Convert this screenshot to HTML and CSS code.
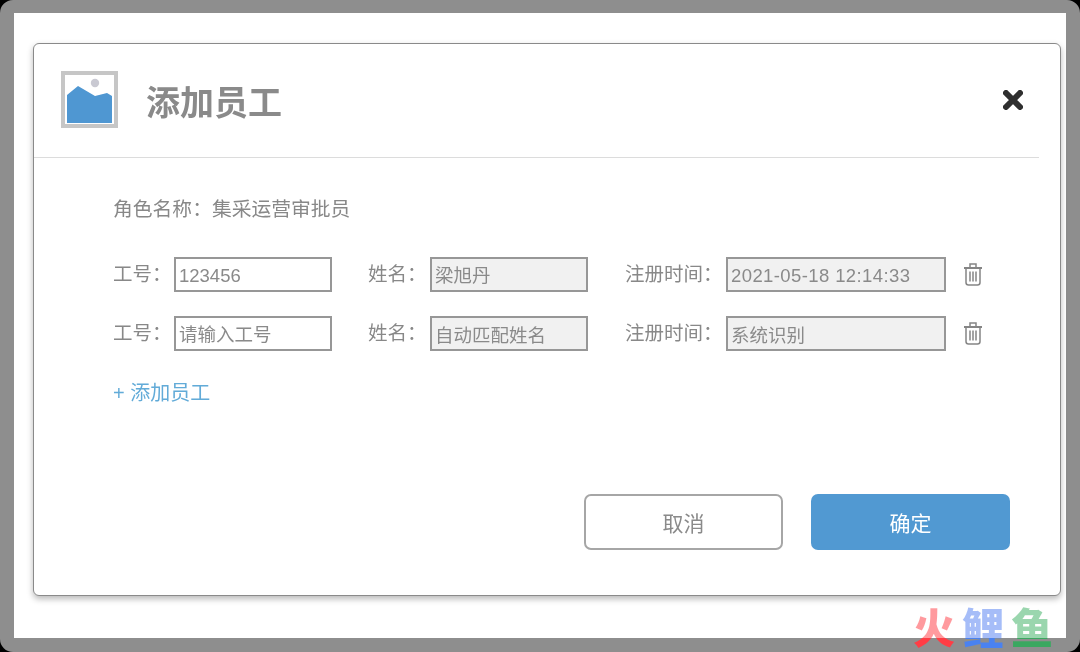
FILE: index.html
```html
<!DOCTYPE html>
<html lang="zh-CN">
<head>
<meta charset="utf-8">
<title>添加员工</title>
<link rel="stylesheet" href="styles.css">
</head>
<body>
<div class="frame">
  <section class="dialog">
    <header class="dialog-head">
      <svg class="logo" viewBox="0 0 57 57" width="57" height="57">
        <rect x="2" y="2" width="53" height="53" fill="#fff" stroke="#c6c6c6" stroke-width="4"/>
        <circle cx="34" cy="12" r="4.2" fill="#c9c9d2"/>
        <path d="M6 24 L17 15 L34 25 L46 22 L51 25 V52 H6 Z" fill="#4f97d2"/>
      </svg>
      <h1 class="title">添加员工</h1>
      <svg class="close" viewBox="0 0 20 20" width="20" height="20">
        <path d="M3 3 L17 17 M17 3 L3 17" stroke="#2f2f2f" stroke-width="6" stroke-linecap="round" fill="none"/>
      </svg>
    </header>
    <div class="dialog-body">
      <p class="role">角色名称：集采运营审批员</p>
      <div class="row">
        <label class="label label-id">工号：</label>
        <input class="field field-s low" value="123456" readonly>
        <label class="label label-name">姓名：</label>
        <input class="field field-s off" value="梁旭丹" readonly>
        <label class="label label-time">注册时间：</label>
        <input class="field field-l off stamp" value="2021-05-18 12:14:33" readonly>
        <svg class="trash" viewBox="0 0 20 24" width="20" height="24">
          <g fill="none" stroke="#858585" stroke-width="1.5">
            <path d="M1 6 H19" stroke-width="2"/>
            <path d="M7 5.500 V2 H13 V5.500"/>
            <path d="M3 6 V20.500 Q3 23 5.500 23 H14.500 Q17 23 17 20.500 V6"/>
            <path d="M7 9.500 V19.500 M10 9.500 V19.500 M13 9.500 V19.500"/>
          </g>
        </svg>
      </div>
      <div class="row">
        <label class="label label-id">工号：</label>
        <input class="field field-s low" placeholder="请输入工号" readonly>
        <label class="label label-name">姓名：</label>
        <input class="field field-s off next" value="自动匹配姓名" readonly>
        <label class="label label-time">注册时间：</label>
        <input class="field field-l off next" value="系统识别" readonly>
        <svg class="trash" viewBox="0 0 20 24" width="20" height="24">
          <g fill="none" stroke="#858585" stroke-width="1.5">
            <path d="M1 6 H19" stroke-width="2"/>
            <path d="M7 5.500 V2 H13 V5.500"/>
            <path d="M3 6 V20.500 Q3 23 5.500 23 H14.500 Q17 23 17 20.500 V6"/>
            <path d="M7 9.500 V19.500 M10 9.500 V19.500 M13 9.500 V19.500"/>
          </g>
        </svg>
      </div>
      <a class="add">+ 添加员工</a>
      <footer class="actions">
        <button class="btn btn-cancel">取消</button>
        <button class="btn btn-ok">确定</button>
      </footer>
    </div>
  </section>
</div>
<div class="watermark"><span class="wm-red">火</span><span class="wm-blue">鲤</span><span class="wm-green">鱼</span></div>
</body>
</html>
```

FILE: styles.css
```css
* { box-sizing: border-box; }
html, body { margin: 0; height: 100%; background: #000; }
body {
  position: relative;
  font-family: "Liberation Sans", "Noto Sans CJK SC", sans-serif;
  color: #888;
  overflow: hidden;
}
.frame {
  width: 1080px;
  height: 652px;
  background: #fff;
  border: solid #8e8e8e;
  border-width: 13px 14px 14px 14px;
  border-radius: 13px;
  padding: 30px 0 0 19px;
}
.dialog {
  width: 1028px;
  height: 553px;
  background: #fff;
  border: 1px solid #8a8a8a;
  border-radius: 6px;
  box-shadow: 0 3px 6px rgba(0,0,0,.28);
  display: flex;
  flex-direction: column;
  filter: blur(.35px);
}
.dialog-head {
  height: 114px;
  margin-right: 21px;
  padding: 0 16px 0 27px;
  border-bottom: 1px solid #dcdcdc;
  display: flex;
  align-items: center;
}
.logo { flex: none; margin-top: -3px; }
.title {
  margin: 5px 0 0 28px;
  font-size: 34px;
  line-height: 44px;
  font-weight: 700;
  color: #8a8a8a;
}
.close { margin-left: auto; margin-top: -2px; }
.dialog-body {
  flex: 1;
  display: flex;
  flex-direction: column;
  padding: 38px 50px 45px 79px;
}
.role {
  margin: 0 0 35px;
  font-size: 19.800px;
  line-height: 26px;
}
.row {
  display: flex;
  align-items: center;
  height: 35px;
  margin-bottom: 24px;
}
.label {
  font-size: 19.500px;
  line-height: 26px;
  margin-top: -1px;
  white-space: nowrap;
}
.label-id { width: 61px; }
.label-name { width: 62px; margin-left: 36px; }
.label-time { width: 101px; margin-left: 37px; }
.field {
  height: 35px;
  padding: 0 4px 1px 3px;
  border: 2px solid #979797;
  border-radius: 0;
  outline: none;
  background: #fff;
  color: #8a8a8a;
  font: 18.500px "Liberation Sans", "Noto Sans CJK SC", sans-serif;
}
.field::placeholder { color: #8a8a8a; opacity: 1; }
.field-s { width: 158px; }
.field-l { width: 220px; }
.low { padding-top: 3px; padding-bottom: 0; }
.next { padding-top: 1px; padding-bottom: 0; }
.off { background: #f1f1f1; }
.stamp { letter-spacing: .4px; padding-top: 2px; padding-bottom: 0; }
.trash { margin-left: 17px; margin-top: -1px; flex: none; }
.add {
  margin-top: 5px;
  font-size: 20px;
  line-height: 26px;
  color: #62abd8;
}
.actions {
  margin-top: auto;
  display: flex;
  justify-content: flex-end;
  gap: 28px;
}
.btn {
  width: 199px;
  height: 56px;
  border-radius: 7px;
  font: 21px "Liberation Sans", "Noto Sans CJK SC", sans-serif;
}
.btn-cancel { background: #fff; border: 2px solid #a6a6a6; color: #8a8a8a; }
.btn-ok { background: #5199d2; border: 0; color: #fff; }
.watermark {
  position: absolute;
  left: 913px;
  top: 602px;
  display: flex;
  gap: 7px;
  font-size: 42px;
  line-height: 48px;
  font-weight: 900;
  font-family: "Noto Sans CJK SC", sans-serif;
}
.watermark span {
  -webkit-background-clip: text;
  background-clip: text;
  color: transparent;
}
.wm-red { background-image: linear-gradient(#ff9a9e 0 36px, #ff3d45 36px); }
.wm-blue { background-image: linear-gradient(#a6bdf8 0 36px, #4a82f0 36px); }
.wm-green { background-image: linear-gradient(#9ad6ae 0 36px, #3aa860 36px); }
```
